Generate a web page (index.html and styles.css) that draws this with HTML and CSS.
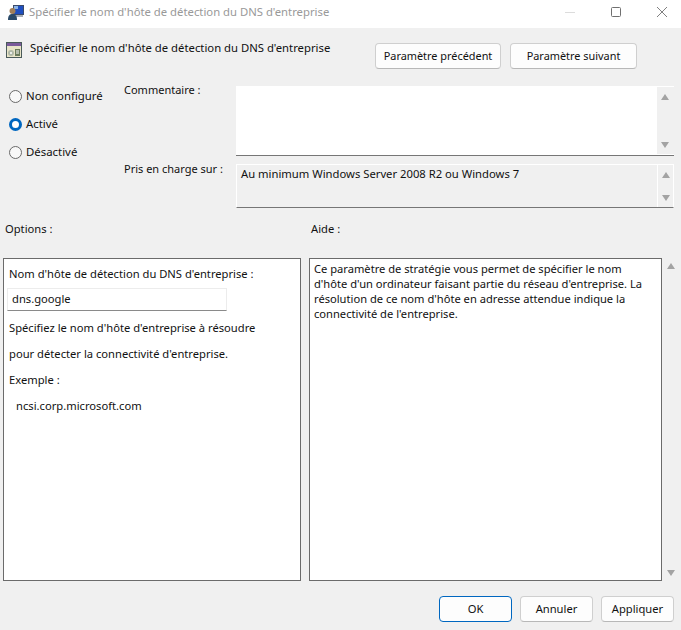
FILE: index.html
```html
<!DOCTYPE html>
<html lang="fr">
<head>
    <title>Spécifier le nom d'hôte de détection du DNS d'entreprise</title>
    <link rel="stylesheet" href="styles.css">
</head>
<body>
    <div class="titlebar">
        <svg class="title-icon" width="16" height="16" viewBox="0 0 16 16">
            <rect x="5" y="1" width="11" height="10" fill="#3a4a6a"/>
            <rect x="6" y="2" width="9" height="8" fill="#1f4fc0"/>
            <rect x="6" y="2" width="4" height="3" fill="#8cb4e6"/>
            <rect x="8" y="11" width="7" height="2" fill="#a8aeb6"/>
            <circle cx="4.5" cy="7" r="3" fill="#a07f58"/>
            <path d="M0 16 C0 11 2 10 4.5 10 C7 10 9 11 9 16 Z" fill="#2a4a68"/>
        </svg>
        <span class="title-text">Spécifier le nom d'hôte de détection du DNS d'entreprise</span>
        <div class="win-buttons">
            <svg width="12" height="12" viewBox="0 0 12 12"><path d="M1 6.5H11" stroke="#dcdcdc" fill="none"/></svg>
            <svg width="12" height="12" viewBox="0 0 12 12"><rect x="1.5" y="1.5" width="9" height="9" rx="1" stroke="#707070" fill="none"/></svg>
            <svg width="12" height="12" viewBox="0 0 12 12"><path d="M1 1L11 11M11 1L1 11" stroke="#808080" fill="none"/></svg>
        </div>
    </div>

    <div class="header">
        <svg class="header-icon" width="16" height="16" viewBox="0 0 16 16">
            <rect x="0" y="0" width="16" height="16" fill="#4a5a5a"/>
            <rect x="1" y="1" width="14" height="3" fill="#7a5a9a"/>
            <rect x="1" y="4" width="14" height="11" fill="#e8e4c8"/>
            <rect x="2" y="8" width="6" height="6" rx="3" fill="#b0b8a8"/>
            <circle cx="5" cy="11" r="1" fill="#fff"/>
            <rect x="9" y="7" width="5" height="7" fill="#6a7a5a"/>
            <path d="M10 9H13M10 11H13" stroke="#fff"/>
        </svg>
        <span class="header-text">Spécifier le nom d'hôte de détection du DNS d'entreprise</span>
        <div class="nav-buttons">
            <button class="btn nav-prev">Paramètre précédent</button>
            <button class="btn nav-next">Paramètre suivant</button>
        </div>
    </div>

    <div class="config">
        <div class="radios">
            <div class="radio-row"><span class="radio"></span>Non configuré</div>
            <div class="radio-row"><span class="radio checked"></span>Activé</div>
            <div class="radio-row"><span class="radio"></span>Désactivé</div>
        </div>
        <div class="fields">
            <div class="field-label">Commentaire :</div>
            <div class="box comment-box">
                <div class="box-text"></div>
                <div class="scrollbar"><span class="arrow up"></span><span class="arrow down"></span></div>
            </div>
            <div class="field-label support-label">Pris en charge sur :</div>
            <div class="box support-box">
                <div class="box-text">Au minimum Windows Server 2008 R2 ou Windows 7</div>
                <div class="scrollbar"><span class="arrow up"></span><span class="arrow down"></span></div>
            </div>
        </div>
    </div>

    <div class="panel-labels">
        <div class="options-label">Options :</div>
        <div>Aide :</div>
    </div>

    <div class="panels">
        <div class="panel options-panel">
            <div class="opt-line first">Nom d'hôte de détection du DNS d'entreprise :</div>
            <div class="opt-input">dns.google</div>
            <div class="opt-line">Spécifiez le nom d'hôte d'entreprise à résoudre</div>
            <div class="opt-line">pour détecter la connectivité d'entreprise.</div>
            <div class="opt-line">Exemple :</div>
            <div class="opt-line indent">ncsi.corp.microsoft.com</div>
        </div>
        <div class="panel help-panel">Ce paramètre de stratégie vous permet de spécifier le nom<br>d'hôte d'un ordinateur faisant partie du réseau d'entreprise. La<br>résolution de ce nom d'hôte en adresse attendue indique la<br>connectivité de l'entreprise.</div>
        <div class="help-scroll"><span class="arrow up"></span><span class="arrow down"></span></div>
    </div>

    <div class="footer">
        <button class="btn btn-ok">OK</button>
        <button class="btn">Annuler</button>
        <button class="btn">Appliquer</button>
    </div>
</body>
</html>
```

FILE: styles.css
```css
* {
    box-sizing: border-box;
}
html, body {
    margin: 0;
    height: 630px;
    overflow: hidden;
}
body {
    background-color: #f0f0f0;
    font-family: "Noto Sans", Arial, sans-serif;
    font-size: 11.2px;
    line-height: 16px;
    color: #111;
    white-space: nowrap;
}

/* title bar */
.titlebar {
    display: flex;
    align-items: center;
    height: 28px;
    background-color: #fff;
    padding: 0 13px 4px 8px;
}
.title-text {
    margin-left: 5px;
    color: #999;
    font-size: 11.3px;
}
.win-buttons {
    display: flex;
    gap: 34px;
    margin-left: auto;
}

/* header row */
.header {
    display: flex;
    height: 54px;
    padding: 15px 44px 0 6px;
}
.header-icon {
    margin-top: -1px;
}
.header-text {
    margin-left: 8px;
    margin-top: -3px;
    font-size: 11.3px;
}
.nav-buttons {
    display: flex;
    gap: 9px;
    margin-left: auto;
}
.btn {
    width: 73px;
    height: 26px;
    padding: 0;
    background-color: #fdfdfd;
    border: 1px solid #cfcfcf;
    border-bottom-color: #b8b8b8;
    border-radius: 4px;
    font: inherit;
    color: inherit;
}
.nav-prev {
    width: 126px;
    font-size: 10.9px;
}
.nav-next {
    width: 127px;
    font-size: 10.9px;
}
.btn-ok {
    border: 1px solid #0067c0;
}

/* state + comment */
.config {
    display: flex;
    height: 126px;
}
.radios {
    width: 124px;
    padding-left: 9px;
}
.radio-row {
    display: flex;
    align-items: center;
    height: 28px;
    font-size: 11.4px;
}
.radio {
    width: 13px;
    height: 13px;
    margin-right: 4px;
    background-color: #f8f8f8;
    border: 1px solid #6a6a6a;
    border-radius: 50%;
}
.radio.checked {
    background-color: #fff;
    border: 3.5px solid #0067c0;
}
.fields {
    display: grid;
    grid-template-columns: 112px 438px;
    grid-template-rows: 74px 52px;
}
.field-label {
    font-size: 11px;
}
.support-label {
    padding-top: 5px;
}
.box {
    display: flex;
    border-bottom: 1px solid #767676;
}
.comment-box {
    margin-top: 4px;
    background-color: #fff;
}
.support-box {
    margin-top: 8px;
    background-color: #f0f0f0;
    border-top: 1px solid #fff;
    border-left: 1px solid #fff;
    border-right: 1px solid #fff;
}
.box-text {
    flex: 1;
    padding: 1px 4px;
    font-size: 11.25px;
}
.scrollbar {
    position: relative;
    width: 17px;
    background-color: #f0f0f0;
}
.support-box .scrollbar {
    width: 16px;
    border-left: 1px solid #fff;
}
.comment-box .scrollbar {
    margin: 1px 0;
}
.arrow {
    position: absolute;
    left: 4px;
    width: 0;
    height: 0;
    border-left: 4.5px solid transparent;
    border-right: 4.5px solid transparent;
}
.arrow.up {
    top: 7px;
    border-bottom: 6px solid #a3a3a3;
}
.arrow.down {
    bottom: 6px;
    border-top: 6px solid #a3a3a3;
}

/* options + help */
.panel-labels {
    display: flex;
    height: 50px;
    padding-top: 13px;
    padding-left: 5px;
}
.options-label {
    width: 306px;
}
.panels {
    display: flex;
    height: 323px;
    padding-left: 3px;
}
.panel {
    height: 323px;
    background-color: #fff;
    border: 1px solid #6b6b6b;
}
.options-panel {
    width: 298px;
    padding: 0 5px;
}
.opt-line {
    height: 26px;
    line-height: 26px;
}
.opt-line.first {
    margin-top: 2px;
}
.opt-line.indent {
    padding-left: 7px;
}
.opt-input {
    width: 220px;
    height: 23px;
    margin: 1px 0 4px -2px;
    padding: 2px 3px 2px 4px;
    border: 1px solid #ececec;
    border-bottom-color: #8a8a8a;
    font-size: 11.2px;
}
.help-panel {
    width: 353px;
    margin-left: 8px;
    padding: 2px 4px;
    font-size: 11.15px;
    line-height: 15px;
}
.help-scroll {
    position: relative;
    width: 17px;
    margin-left: 1px;
}
.help-scroll .arrow.up {
    top: 5px;
}
.help-scroll .arrow.down {
    bottom: 5px;
}

/* bottom buttons */
.footer {
    display: flex;
    justify-content: flex-end;
    gap: 8px;
    padding: 15px 7px 0 0;
}
```
